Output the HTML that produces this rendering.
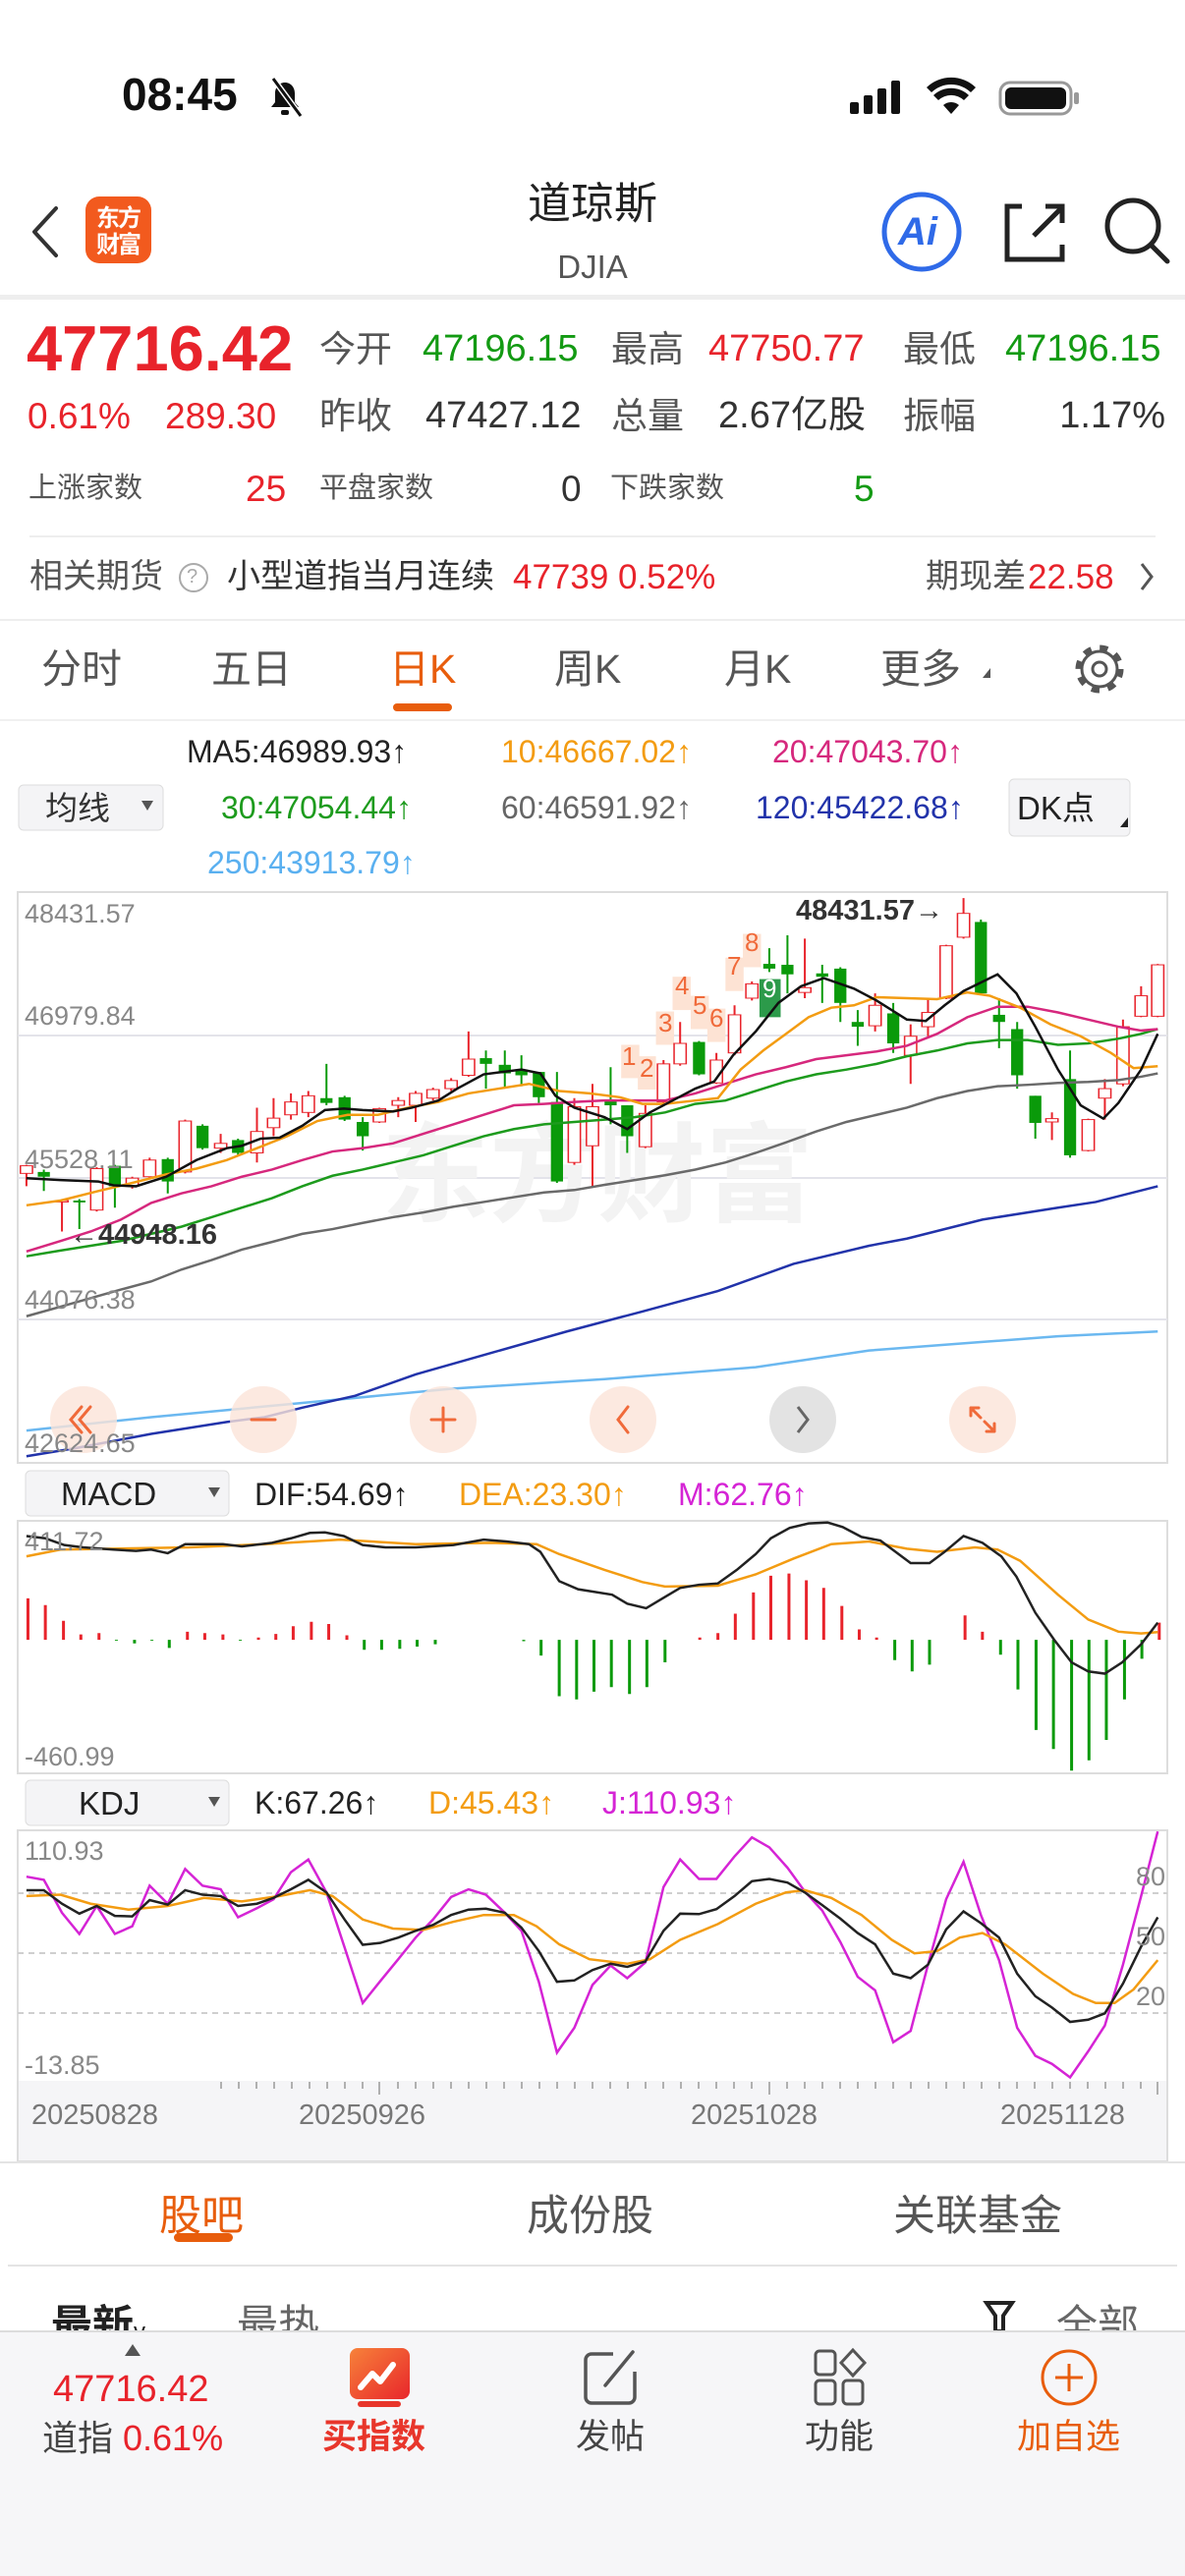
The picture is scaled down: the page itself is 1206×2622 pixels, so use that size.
<!DOCTYPE html>
<html><head><meta charset="utf-8">
<style>
*{margin:0;padding:0;box-sizing:border-box}
body{width:1206px;height:2622px;position:relative;background:#fff;font-family:"Liberation Sans","Noto Sans CJK SC",sans-serif;overflow:hidden;color:#222}
.t{position:absolute;white-space:nowrap;line-height:1}
.r{color:#e8232b}.g{color:#139a13}.gy{color:#555}
.n{vector-effect:non-scaling-stroke;fill:none}
svg{position:absolute;left:0;top:0}
</style></head><body>
<svg width="1206" height="2622" viewBox="0 0 1206 2622">
<g fill="#111">
<path d="M290 84c-6 0-10 5-10 11v9l-4 5h28l-4-5v-9c0-6-4-11-10-11z"/><rect x="286" y="112" width="8" height="5" rx="2"/>
<line x1="278" y1="80" x2="306" y2="118" stroke="#fff" stroke-width="6"/><line x1="278" y1="80" x2="306" y2="118" stroke="#111" stroke-width="3"/>
<rect x="865" y="104" width="9" height="12" rx="2"/><rect x="879" y="97" width="9" height="19" rx="2"/><rect x="893" y="90" width="9" height="26" rx="2"/><rect x="907" y="82" width="9" height="34" rx="2"/>
<path d="M968 116l-8-9a12 12 0 0 1 16 0z"/>
<path d="M950 97a26 26 0 0 1 36 0l-5 5a19 19 0 0 0-26 0z"/>
<path d="M943 89a36 36 0 0 1 50 0l-5 5a29 29 0 0 0-40 0z"/>
<rect x="1018" y="84" width="72" height="32" rx="10" fill="none" stroke="#999" stroke-width="3"/><rect x="1023" y="89" width="62" height="22" rx="6"/><rect x="1093" y="94" width="5" height="12" rx="2" fill="#999"/>
</g>
<path d="M57 212L35 236L57 260" stroke="#333" stroke-width="4" fill="none" stroke-linecap="round" stroke-linejoin="round"/>
<rect x="87" y="200" width="67" height="68" rx="14" fill="#f25a1e"/>
<circle cx="938" cy="236" r="38" fill="none" stroke="#2f6ae8" stroke-width="5"/>
<path d="M1040 210h-15v54h56v-15" fill="none" stroke="#222" stroke-width="5"/><path d="M1052 240l28-28M1064 210h17v17" fill="none" stroke="#222" stroke-width="5"/>
<circle cx="1153" cy="230" r="26" fill="none" stroke="#222" stroke-width="5"/><path d="M1172 250l16 16" stroke="#222" stroke-width="5" stroke-linecap="round"/>
<rect x="0" y="300" width="1206" height="5" fill="#eeeeee"/>
<rect x="30" y="545" width="1146" height="2" fill="#eeeeee"/>
<circle cx="197" cy="588" r="14" fill="none" stroke="#aaa" stroke-width="2"/>
<path d="M1162 574l10 13-10 13" stroke="#555" stroke-width="3" fill="none"/>
<rect x="0" y="630" width="1206" height="2" fill="#eeeeee"/>
<rect x="400" y="716" width="60" height="8" rx="4" fill="#e85d0c"/>
<path d="M1000 690l8-10v10z" fill="#555"/>
<g fill="none" stroke="#555"><circle cx="1119" cy="681" r="21" stroke-width="7" stroke-dasharray="8 8.5"/><circle cx="1119" cy="681" r="18" stroke-width="3" fill="#fff"/><circle cx="1119" cy="681" r="7" stroke-width="3"/></g>
<rect x="0" y="732" width="1206" height="2" fill="#f0f0f0"/>
<rect x="19" y="799" width="147" height="46" rx="5" fill="#f4f4f6" stroke="#ddd"/>
<path d="M144 815h12l-6 10z" fill="#555"/>
<rect x="1027" y="793" width="123" height="58" rx="5" fill="#f4f4f6" stroke="#ddd"/>
<path d="M1140 842l8-10v10z" fill="#222"/>
<rect x="18" y="908" width="1170" height="581" fill="#fff" stroke="#ddd" stroke-width="2"/>
<g stroke="#e3e3ea" stroke-width="2"><line x1="18" y1="1054" x2="1188" y2="1054"/><line x1="18" y1="1199" x2="1188" y2="1199"/><line x1="18" y1="1343" x2="1188" y2="1343"/></g>
<text x="608" y="1235" font-size="110" font-weight="bold" fill="#f3f3f3" text-anchor="middle" font-family="Noto Sans CJK SC">东方财富</text>
<g transform="translate(0 730) scale(0.7691 0.4847)">
<g fill="#fde3d4"><rect x="822" y="688" width="24" height="70"/><rect x="844" y="712" width="24" height="70"/><rect x="868" y="618" width="24" height="70"/><rect x="890" y="545" width="24" height="70"/><rect x="914" y="585" width="24" height="70"/><rect x="936" y="612" width="24" height="70"/><rect x="960" y="505" width="24" height="70"/><rect x="983" y="455" width="24" height="70"/></g>
<rect x="1005" y="550" width="28" height="80" fill="#2c9a4a"/>
<path class="n" stroke="#e8232b" stroke-width="2" d="M35 940V985M82 1012V1080M128 945V1038M175 965V990M198 925V968M245 845V958M292 875V915M340 820V935M362 800V880M385 790V845M408 785V840M502 820V852M527 798V840M550 785V850M573 778V805M597 758V785M620 660V755M760 800V940M784 770V985M854 815V905M878 720V810M900 640V732M948 705V770M972 605V710M995 555V595M1065 465V590M1158 580V660M1205 645V770M1228 590V670M1252 478V592M1275 380V465M1392 830V888M1440 843V912M1462 760V845M1486 635V775M1510 565V630M1532 518V630"/>
<path class="n" stroke="#0a9a0a" stroke-width="2" d="M58 950V995M105 1012V1075M152 940V1030M222 925V1000M268 855V908M315 885V920M432 728V815M456 795V848M480 840V910M643 700V780M668 700V778M690 710V775M713 745V810M737 745V978M808 735V855M830 815V915M925 680V752M1018 485V535M1042 458V580M1088 520V600M1112 525V640M1135 615V690M1182 600V705M1298 425V582M1322 590V695M1346 640V780M1370 795V885M1416 700V925"/>
<g class="n" stroke="#e8232b" stroke-width="2" fill="#fff" style="fill:#fff">
<rect x="27" y="942" width="16" height="16"/><rect x="74" y="1015" width="16" height="3"/><rect x="120" y="948" width="16" height="87"/><rect x="167" y="968" width="16" height="17"/><rect x="190" y="930" width="16" height="35"/><rect x="237" y="848" width="16" height="107"/><rect x="284" y="895" width="16" height="10"/><rect x="332" y="870" width="16" height="45"/><rect x="354" y="842" width="16" height="20"/><rect x="377" y="808" width="16" height="27"/><rect x="400" y="795" width="16" height="35"/><rect x="494" y="822" width="16" height="28"/><rect x="519" y="805" width="16" height="10"/><rect x="542" y="790" width="16" height="25"/><rect x="565" y="782" width="16" height="18"/><rect x="589" y="763" width="16" height="17"/><rect x="612" y="718" width="16" height="34"/><rect x="752" y="818" width="16" height="117"/><rect x="776" y="818" width="16" height="82"/><rect x="846" y="832" width="16" height="70"/><rect x="870" y="728" width="16" height="80"/><rect x="892" y="685" width="16" height="43"/><rect x="940" y="720" width="16" height="48"/><rect x="964" y="625" width="16" height="80"/><rect x="987" y="560" width="16" height="30"/><rect x="1057" y="568" width="16" height="10"/><rect x="1150" y="605" width="16" height="43"/><rect x="1197" y="670" width="16" height="40"/><rect x="1220" y="620" width="16" height="30"/><rect x="1244" y="480" width="16" height="110"/><rect x="1267" y="412" width="16" height="50"/><rect x="1384" y="843" width="16" height="7"/><rect x="1432" y="845" width="16" height="65"/><rect x="1454" y="780" width="16" height="20"/><rect x="1478" y="650" width="16" height="120"/><rect x="1502" y="585" width="16" height="43"/><rect x="1524" y="520" width="16" height="108"/>
</g>
<g fill="#0a9a0a">
<rect x="50" y="955" width="16" height="10"/><rect x="97" y="1015" width="16" height="4"/><rect x="144" y="942" width="16" height="43"/><rect x="214" y="928" width="16" height="47"/><rect x="260" y="858" width="16" height="47"/><rect x="307" y="888" width="16" height="27"/><rect x="424" y="800" width="16" height="10"/><rect x="448" y="798" width="16" height="47"/><rect x="472" y="850" width="16" height="30"/><rect x="635" y="716" width="16" height="12"/><rect x="660" y="730" width="16" height="18"/><rect x="682" y="740" width="16" height="12"/><rect x="705" y="745" width="16" height="53"/><rect x="729" y="808" width="16" height="167"/><rect x="800" y="805" width="16" height="10"/><rect x="822" y="815" width="16" height="65"/><rect x="917" y="682" width="16" height="68"/><rect x="1010" y="518" width="16" height="10"/><rect x="1034" y="520" width="16" height="20"/><rect x="1080" y="538" width="16" height="7"/><rect x="1104" y="528" width="16" height="72"/><rect x="1127" y="640" width="16" height="10"/><rect x="1174" y="622" width="16" height="63"/><rect x="1290" y="430" width="16" height="150"/><rect x="1314" y="625" width="16" height="15"/><rect x="1338" y="655" width="16" height="97"/><rect x="1362" y="795" width="16" height="57"/><rect x="1408" y="760" width="16" height="160"/>
</g>
<polyline class="n" stroke="#6bb8f0" stroke-width="2.5" points="35,1498 200,1470 400,1440 600,1410 800,1390 1000,1365 1150,1330 1300,1312 1400,1300 1532,1290"/>
<polyline class="n" stroke="#2233aa" stroke-width="2.5" points="35,1552 100,1535 200,1505 300,1480 350,1470 400,1450 470,1425 550,1380 650,1335 750,1290 850,1248 950,1205 1050,1148 1150,1110 1200,1095 1300,1055 1400,1030 1450,1018 1532,985"/>
<polyline class="n" stroke="#6a6a6a" stroke-width="2.5" points="35,1258 80,1238 120,1220 160,1202 200,1185 240,1160 280,1140 320,1118 360,1102 400,1085 440,1075 480,1062 520,1050 560,1040 600,1028 640,1018 680,1008 720,998 760,993 800,982 840,972 880,962 920,950 960,935 1000,915 1040,893 1080,870 1120,850 1160,835 1200,820 1240,800 1280,785 1320,775 1360,772 1400,768 1440,766 1480,762 1510,755 1532,748"/>
<polyline class="n" stroke="#1d9b1d" stroke-width="2.5" points="35,1132 80,1120 120,1110 160,1100 200,1085 240,1070 280,1050 320,1030 360,1010 400,985 440,963 480,950 520,935 560,920 600,900 640,880 680,865 720,855 760,850 800,845 840,840 880,830 920,812 960,805 1000,785 1040,765 1080,750 1120,740 1160,728 1200,712 1240,700 1280,685 1320,678 1360,678 1400,688 1440,685 1480,675 1510,665 1532,655"/>
<polyline class="n" stroke="#d6287d" stroke-width="2.5" points="35,1122 80,1100 120,1080 160,1055 200,1020 240,1000 280,985 320,965 360,950 400,930 440,912 480,905 520,895 560,875 600,855 640,835 680,815 720,812 760,808 800,805 840,805 880,805 920,790 960,770 1000,750 1040,735 1080,718 1120,710 1160,702 1200,690 1240,665 1280,630 1320,608 1360,608 1400,620 1440,635 1480,650 1510,658 1532,655"/>
<polyline class="n" stroke="#f39c12" stroke-width="2.5" points="35,1025 80,1015 130,995 170,980 220,960 260,948 300,930 340,905 380,880 420,848 460,835 500,835 540,820 580,808 620,790 660,780 700,770 740,785 780,790 820,798 850,812 880,812 920,805 950,800 980,740 1010,700 1040,665 1070,630 1100,610 1130,605 1160,588 1200,590 1240,592 1280,578 1310,585 1350,610 1390,645 1430,670 1470,705 1500,737 1532,733"/>
<polyline class="n" stroke="#111" stroke-width="2.5" points="35,968 80,972 130,975 150,983 180,985 220,965 260,930 300,905 320,900 345,885 370,883 400,858 430,825 455,822 480,825 520,828 545,820 580,805 605,780 640,750 690,740 715,748 735,795 760,820 800,840 830,865 860,830 890,805 920,780 945,765 970,710 1000,660 1030,600 1060,565 1090,548 1130,570 1160,595 1200,635 1225,638 1250,605 1275,575 1320,540 1345,580 1370,650 1400,740 1430,815 1460,843 1480,810 1510,740 1532,665"/>
</g>
<g><circle cx="85" cy="1445" r="34" fill="#fbe4d8" opacity=".8"/><circle cx="268" cy="1445" r="34" fill="#fbe4d8" opacity=".8"/><circle cx="451" cy="1445" r="34" fill="#fbe4d8" opacity=".8"/><circle cx="634" cy="1445" r="34" fill="#fbe4d8" opacity=".8"/><circle cx="817" cy="1445" r="34" fill="#e0e0e0" opacity=".9"/><circle cx="1000" cy="1445" r="34" fill="#fbe4d8" opacity=".8"/></g>
<g stroke="#f06a3a" stroke-width="3" fill="none" stroke-linecap="round">
<path d="M83 1432l-11 13 11 13M92 1432l-11 13 11 13"/><path d="M256 1445h24"/><path d="M439 1445h24M451 1433v24"/><path d="M639 1432l-10 13 10 13"/>
<path d="M988 1433l10 10M988 1433v8M988 1433h8M1012 1457l-10-10M1012 1457v-8M1012 1457h-8"/></g>
<path d="M812 1432l10 13-10 13" stroke="#666" stroke-width="3" fill="none"/>
<rect x="26" y="1497" width="207" height="46" rx="5" fill="#f4f4f6" stroke="#ddd"/>
<path d="M212 1514h12l-6 10z" fill="#555"/>
<rect x="18" y="1548" width="1170" height="257" fill="#fff" stroke="#ddd" stroke-width="2"/>
<g transform="translate(0 1490) scale(0.7691 0.4592)">
<path class="n" stroke="#e8232b" stroke-width="3" d="M37 390V298M60 390V313M84 390V348M107 390V378M131 390V375M248 390V372M271 390V375M295 390V378M342 390V385M365 390V377M388 390V360M412 390V350M435 390V355M459 390V380M926 390V385M950 390V375M973 390V332M997 390V285M1020 390V248M1044 390V243M1067 390V258M1090 390V275M1114 390V315M1137 390V367M1160 390V385M1277 390V336M1300 390V372M1534 390V352"/>
<path class="n" stroke="#0a9a0a" stroke-width="3" d="M154 390V392M178 390V398M201 390V392M224 390V408M318 390V392M482 390V412M505 390V412M529 390V410M552 390V405M576 390V400M693 390V393M716 390V425M740 390V515M763 390V522M786 390V505M809 390V495M833 390V510M856 390V495M880 390V440M1184 390V435M1207 390V460M1230 390V445M1324 390V423M1347 390V500M1371 390V590M1394 390V632M1418 390V680M1441 390V657M1464 390V612M1488 390V522M1511 390V432"/>
<polyline class="n" stroke="#f39c12" stroke-width="2.5" points="35,205 80,190 150,188 250,185 350,178 450,168 550,178 650,175 710,178 740,200 800,235 850,262 880,272 950,270 1000,245 1050,210 1100,178 1150,172 1200,188 1240,195 1290,185 1320,190 1350,215 1400,290 1440,345 1480,372 1510,376 1532,373"/>
<polyline class="n" stroke="#222" stroke-width="2.5" points="35,160 60,165 85,180 110,185 150,190 180,193 200,190 222,198 245,178 295,178 320,183 360,175 385,165 410,153 430,152 455,160 480,180 510,185 550,185 600,180 640,168 670,172 700,178 715,195 740,260 765,278 810,290 830,310 855,320 880,295 900,275 925,268 950,265 975,235 1000,200 1020,165 1045,142 1070,132 1095,130 1115,140 1140,162 1165,170 1185,195 1205,220 1230,220 1250,195 1275,160 1300,175 1325,205 1345,250 1370,330 1395,390 1418,440 1440,460 1462,465 1485,440 1510,400 1532,352"/>
</g>
<rect x="26" y="1812" width="207" height="46" rx="5" fill="#f4f4f6" stroke="#ddd"/>
<path d="M212 1829h12l-6 10z" fill="#555"/>
<rect x="18" y="1863" width="1170" height="337" fill="#fff" stroke="#ddd" stroke-width="2"/>
<rect x="19" y="2118" width="1168" height="81" fill="#f5f5f7"/>
<g stroke="#cfcfcf" stroke-width="2" stroke-dasharray="6 5"><line x1="18" y1="1927" x2="1188" y2="1927"/><line x1="18" y1="1988" x2="1188" y2="1988"/><line x1="18" y1="2049" x2="1188" y2="2049"/></g>
<g stroke="#999" stroke-width="1.5">
<path d="M225 2119v7M243 2119v7M261 2119v7M279 2119v7M297 2119v7M315 2119v7M333 2119v7M351 2119v7M369 2119v7M386 2119v13M405 2119v7M423 2119v7M441 2119v7M459 2119v7M477 2119v7M495 2119v7M513 2119v7M531 2119v7M549 2119v7M567 2119v7M585 2119v7M603 2119v7M621 2119v7M639 2119v7M657 2119v7M675 2119v7M693 2119v7M711 2119v7M729 2119v7M747 2119v7M765 2119v7M783 2119v13M801 2119v7M819 2119v7M837 2119v7M855 2119v7M873 2119v7M891 2119v7M909 2119v7M927 2119v7M945 2119v7M963 2119v7M981 2119v7M999 2119v7M1017 2119v7M1035 2119v7M1053 2119v7M1071 2119v7M1089 2119v7M1107 2119v7M1125 2119v7M1143 2119v7M1161 2119v7M1178 2119v13"/></g>
<g transform="translate(0 1490) scale(0.7691 0.4592)">
<polyline class="n" stroke="#d524d5" stroke-width="2.5" points="35,915 58,922 82,995 105,1042 128,980 152,1042 175,1025 198,935 222,975 245,898 268,935 292,943 315,1005 340,985 362,965 385,905 408,877 432,950 456,1072 480,1195 503,1147 527,1098 550,1050 573,1010 597,960 620,943 643,955 668,995 690,1035 713,1148 737,1305 760,1250 784,1155 808,1112 830,1140 854,1105 878,938 900,877 925,920 948,920 972,870 995,828 1018,850 1042,895 1065,948 1088,990 1112,1060 1135,1137 1158,1167 1182,1282 1205,1257 1228,1110 1252,965 1275,882 1298,1000 1322,1100 1346,1250 1370,1312 1392,1330 1416,1360 1440,1302 1462,1245 1486,1110 1510,958 1532,815"/>
<polyline class="n" stroke="#f39c12" stroke-width="2.5" points="35,958 80,955 120,975 170,988 222,980 270,962 320,970 370,958 410,945 440,958 480,1010 520,1030 560,1033 600,1015 640,1000 680,1000 710,1025 740,1065 780,1098 830,1108 860,1098 900,1055 950,1020 1000,975 1040,950 1065,945 1100,962 1140,1000 1180,1055 1210,1085 1240,1080 1270,1050 1300,1040 1330,1065 1380,1130 1420,1175 1450,1195 1475,1195 1500,1165 1532,1100"/>
<polyline class="n" stroke="#222" stroke-width="2.5" points="35,945 58,945 82,975 105,997 128,980 152,1002 175,1003 198,967 222,977 245,945 268,955 292,958 315,980 340,975 362,962 385,943 408,922 432,950 456,1010 480,1066 503,1062 527,1050 550,1035 573,1022 597,1000 620,988 643,986 668,995 690,1028 713,1080 737,1148 760,1145 784,1122 808,1108 830,1115 854,1103 878,1035 900,997 925,998 948,987 972,958 995,925 1018,920 1042,928 1065,950 1088,978 1112,1008 1135,1040 1158,1065 1182,1130 1205,1140 1228,1110 1252,1032 1275,992 1298,1018 1322,1050 1346,1130 1370,1180 1392,1205 1416,1237 1440,1232 1462,1218 1486,1152 1510,1070 1532,1005"/>
</g>
<rect x="0" y="2200" width="1206" height="2" fill="#e4e4e4"/>
<rect x="177" y="2273" width="60" height="9" rx="4.5" fill="#e85d0c"/>
<rect x="8" y="2305" width="1190" height="2" fill="#e4e4e4"/>
<rect x="0" y="2373" width="1206" height="249" fill="#f6f6f8"/>
<rect x="0" y="2372" width="1206" height="2" fill="#dcdcdc"/>
<path d="M127 2398l8-12 8 12z" fill="#555"/>
<defs><linearGradient id="bg1" x1="0" y1="0" x2="1" y2="1"><stop offset="0" stop-color="#f7823a"/><stop offset="1" stop-color="#e8262b"/></linearGradient></defs>
<rect x="356" y="2390" width="61" height="52" rx="8" fill="url(#bg1)"/><rect x="364" y="2444" width="44" height="6" rx="3" fill="#e8362b"/>
<path d="M367 2430l12-14 8 8 13-17" stroke="#fff" stroke-width="6" fill="none" stroke-linecap="round" stroke-linejoin="round"/>
<path d="M624 2396h-22a6 6 0 0 0-6 6v38a6 6 0 0 0 6 6h38a6 6 0 0 0 6-6v-26" stroke="#555" stroke-width="3.5" fill="none"/><path d="M616 2428l28-34" stroke="#555" stroke-width="3.5" stroke-linecap="round"/>
<g stroke="#555" stroke-width="3" fill="none"><rect x="830" y="2393" width="20" height="24" rx="4"/><path d="M868 2392l12 13-12 13-12-13z"/><rect x="830" y="2423" width="20" height="24" rx="4"/><rect x="858" y="2423" width="20" height="24" rx="4"/></g>
<circle cx="1088" cy="2420" r="27" stroke="#e85d0c" stroke-width="3" fill="none"/><path d="M1074 2420h28M1088 2406v28" stroke="#e85d0c" stroke-width="3"/>
</svg>

<div class="t" style="left:124px;top:73px;font-size:46px;font-weight:bold;color:#111">08:45</div>
<div class="t" style="left:98px;top:206px;font-size:24px;font-weight:bold;color:#fff;line-height:27px;font-family:'Noto Sans CJK SC',sans-serif;letter-spacing:-2px">东方<br>财富</div>
<div class="t" style="left:0;width:1206px;text-align:center;top:186px;font-size:44px;color:#222">道琼斯</div>
<div class="t" style="left:0;width:1206px;text-align:center;top:255px;font-size:33px;color:#555">DJIA</div>
<div class="t" style="left:914px;top:216px;font-size:40px;font-weight:bold;font-style:italic;color:#2f6ae8">Ai</div>

<div class="t r" style="left:27px;top:322px;font-size:65px;font-weight:bold">47716.42</div>
<div class="t gy" style="left:325px;top:337px;font-size:37px">今开</div>
<div class="t g" style="left:430px;top:336px;font-size:38px">47196.15</div>
<div class="t gy" style="left:622px;top:337px;font-size:37px">最高</div>
<div class="t r" style="left:721px;top:336px;font-size:38px">47750.77</div>
<div class="t gy" style="left:919px;top:337px;font-size:37px">最低</div>
<div class="t g" style="left:1023px;top:336px;font-size:38px">47196.15</div>

<div class="t r" style="left:28px;top:405px;font-size:37px">0.61%</div>
<div class="t r" style="left:168px;top:405px;font-size:37px">289.30</div>
<div class="t gy" style="left:325px;top:405px;font-size:37px">昨收</div>
<div class="t" style="left:433px;top:404px;font-size:38px;color:#333">47427.12</div>
<div class="t gy" style="left:622px;top:405px;font-size:37px">总量</div>
<div class="t" style="left:731px;top:404px;font-size:38px;color:#333">2.67亿股</div>
<div class="t gy" style="left:919px;top:405px;font-size:37px">振幅</div>
<div class="t" style="right:20px;top:404px;font-size:38px;color:#333">1.17%</div>

<div class="t gy" style="left:29px;top:483px;font-size:29px">上涨家数</div>
<div class="t r" style="left:250px;top:479px;font-size:37px">25</div>
<div class="t gy" style="left:325px;top:483px;font-size:29px">平盘家数</div>
<div class="t" style="left:571px;top:479px;font-size:37px;color:#333">0</div>
<div class="t gy" style="left:621px;top:483px;font-size:29px">下跌家数</div>
<div class="t g" style="left:869px;top:479px;font-size:37px">5</div>

<div class="t gy" style="left:30px;top:570px;font-size:34px">相关期货</div>
<div class="t" style="left:190px;top:577px;font-size:20px;color:#aaa">?</div>
<div class="t" style="left:231px;top:570px;font-size:34px;color:#333">小型道指当月连续</div>
<div class="t r" style="left:522px;top:570px;font-size:35px">47739 0.52%</div>
<div class="t gy" style="left:942px;top:570px;font-size:34px">期现差</div>
<div class="t r" style="left:1046px;top:570px;font-size:35px">22.58</div>

<div class="t gy" style="left:42px;top:661px;font-size:41px">分时</div>
<div class="t gy" style="left:215px;top:661px;font-size:41px">五日</div>
<div class="t" style="left:396px;top:661px;font-size:41px;color:#e85d0c">日K</div>
<div class="t gy" style="left:564px;top:661px;font-size:41px">周K</div>
<div class="t gy" style="left:737px;top:661px;font-size:41px">月K</div>
<div class="t gy" style="left:896px;top:661px;font-size:41px">更多</div>

<div class="t" style="left:190px;top:749px;font-size:32px;color:#222">MA5:46989.93↑</div>
<div class="t" style="left:510px;top:749px;font-size:32px;color:#f39c12">10:46667.02↑</div>
<div class="t" style="left:786px;top:749px;font-size:32px;color:#d6287d">20:47043.70↑</div>
<div class="t" style="left:46px;top:806px;font-size:33px;color:#333">均线</div>
<div class="t" style="left:225px;top:806px;font-size:32px;color:#1d9b1d">30:47054.44↑</div>
<div class="t" style="left:510px;top:806px;font-size:32px;color:#666">60:46591.92↑</div>
<div class="t" style="left:769px;top:806px;font-size:32px;color:#2233aa">120:45422.68↑</div>
<div class="t" style="left:1035px;top:806px;font-size:33px;color:#222">DK点</div>
<div class="t" style="left:211px;top:862px;font-size:32px;color:#5ab0f0">250:43913.79↑</div>

<div class="t" style="left:25px;top:917px;font-size:27px;color:#888">48431.57</div>
<div class="t" style="left:25px;top:1021px;font-size:27px;color:#888">46979.84</div>
<div class="t" style="left:25px;top:1167px;font-size:27px;color:#888">45528.11</div>
<div class="t" style="left:25px;top:1310px;font-size:27px;color:#888">44076.38</div>
<div class="t" style="left:25px;top:1456px;font-size:27px;color:#888">42624.65</div>
<div class="t" style="left:810px;top:913px;font-size:29px;font-weight:bold;color:#333">48431.57→</div>
<div class="t" style="left:71px;top:1243px;font-size:29px;font-weight:bold;color:#333">←44948.16</div>
<div class="t" style="left:633px;top:1062px;font-size:26px;color:#f06a3a">1</div>
<div class="t" style="left:651px;top:1074px;font-size:26px;color:#f06a3a">2</div>
<div class="t" style="left:670px;top:1028px;font-size:26px;color:#f06a3a">3</div>
<div class="t" style="left:687px;top:990px;font-size:26px;color:#f06a3a">4</div>
<div class="t" style="left:705px;top:1010px;font-size:26px;color:#f06a3a">5</div>
<div class="t" style="left:722px;top:1023px;font-size:26px;color:#f06a3a">6</div>
<div class="t" style="left:740px;top:970px;font-size:26px;color:#f06a3a">7</div>
<div class="t" style="left:758px;top:946px;font-size:26px;color:#f06a3a">8</div>
<div class="t" style="left:776px;top:993px;font-size:26px;color:#fff">9</div>

<div class="t" style="left:62px;top:1504px;font-size:33px;color:#222">MACD</div>
<div class="t" style="left:259px;top:1505px;font-size:32px;color:#222">DIF:54.69↑</div>
<div class="t" style="left:467px;top:1505px;font-size:32px;color:#f39c12">DEA:23.30↑</div>
<div class="t" style="left:690px;top:1505px;font-size:32px;color:#d524d5">M:62.76↑</div>
<div class="t" style="left:25px;top:1556px;font-size:27px;color:#888">411.72</div>
<div class="t" style="left:25px;top:1775px;font-size:27px;color:#888">-460.99</div>

<div class="t" style="left:80px;top:1819px;font-size:33px;color:#222">KDJ</div>
<div class="t" style="left:259px;top:1819px;font-size:32px;color:#222">K:67.26↑</div>
<div class="t" style="left:436px;top:1819px;font-size:32px;color:#f39c12">D:45.43↑</div>
<div class="t" style="left:613px;top:1819px;font-size:32px;color:#d524d5">J:110.93↑</div>
<div class="t" style="left:25px;top:1871px;font-size:27px;color:#888">110.93</div>
<div class="t" style="left:25px;top:2089px;font-size:27px;color:#888">-13.85</div>
<div class="t" style="right:20px;top:1897px;font-size:27px;color:#888">80</div>
<div class="t" style="right:20px;top:1958px;font-size:27px;color:#888">50</div>
<div class="t" style="right:20px;top:2019px;font-size:27px;color:#888">20</div>
<div class="t" style="left:32px;top:2139px;font-size:29px;color:#777">20250828</div>
<div class="t" style="left:304px;top:2139px;font-size:29px;color:#777">20250926</div>
<div class="t" style="left:703px;top:2139px;font-size:29px;color:#777">20251028</div>
<div class="t" style="left:1018px;top:2139px;font-size:29px;color:#777">20251128</div>

<div class="t" style="left:162px;top:2235px;font-size:43px;color:#e85d0c">股吧</div>
<div class="t" style="left:536px;top:2235px;font-size:43px;color:#555">成份股</div>
<div class="t" style="left:909px;top:2235px;font-size:43px;color:#555">关联基金</div>
<div style="position:absolute;left:0;top:2320px;width:1206px;height:52px;overflow:hidden">
<div class="t" style="left:52px;top:26px;font-size:42px;font-weight:bold;color:#222">最新<span style="font-size:24px;font-weight:normal">v</span></div>
<div class="t" style="left:241px;top:26px;font-size:42px;color:#666">最热</div>
<svg width="1206" height="52" viewBox="0 2320 1206 52" style="position:absolute;left:0;top:0"><path d="M1004 2344h26l-9 13v16l-8 0v-16z" stroke="#222" stroke-width="4" fill="none"/></svg>
<div class="t" style="left:1075px;top:26px;font-size:42px;color:#666">全部</div>
</div>

<div class="t r" style="left:54px;top:2413px;font-size:38px">47716.42</div>
<div class="t" style="left:43px;top:2464px;font-size:36px;color:#444">道指 <span class="r">0.61%</span></div>
<div class="t" style="left:328px;top:2463px;font-size:35px;font-weight:bold;color:#e8362b">买指数</div>
<div class="t" style="left:586px;top:2463px;font-size:35px;color:#444">发帖</div>
<div class="t" style="left:819px;top:2463px;font-size:35px;color:#444">功能</div>
<div class="t" style="left:1035px;top:2463px;font-size:35px;color:#e85d0c">加自选</div>
</body></html>
